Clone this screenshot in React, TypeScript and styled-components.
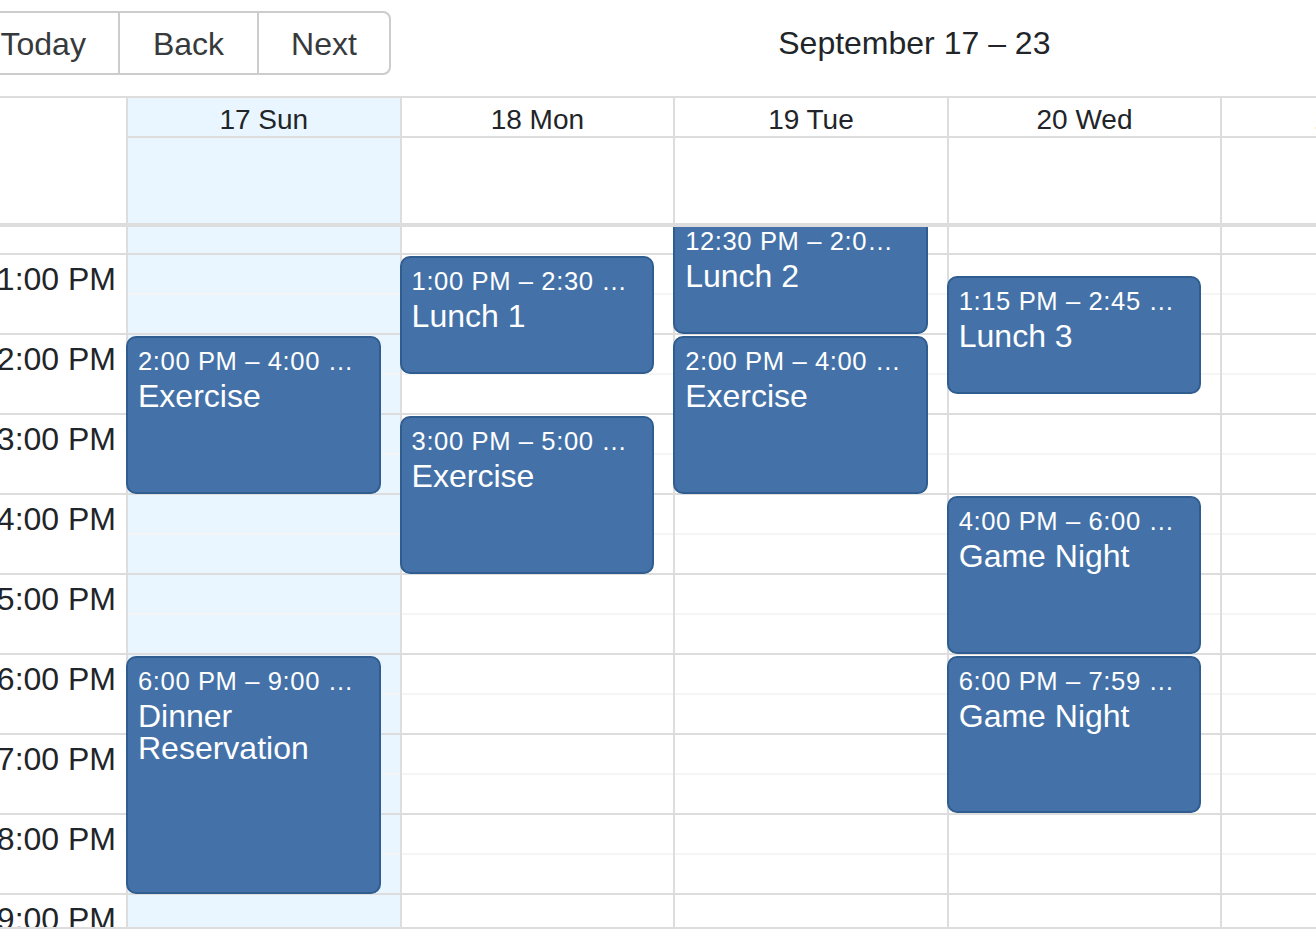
import React, { useLayoutEffect, useRef } from "react";
import styled, { createGlobalStyle } from "styled-components";

const GlobalStyle = createGlobalStyle`
  html, body {
    margin: 0;
    padding: 0;
    overflow: hidden;
    background: #fff;
  }
  body {
    font-family: "Liberation Sans", Arial, sans-serif;
    color: #373a3c;
  }
  * { box-sizing: border-box; }
`;

const HOUR = 80;
const GUTTER = 158;

const Page = styled.div`
  width: 1316px;
  height: 936px;
  overflow: hidden;
  padding-top: 11px;
`;

const Calendar = styled.div`
  width: 2077px;
  margin-left: -34px;
  display: flex;
  flex-direction: column;
`;

const Toolbar = styled.div`
  display: flex;
  align-items: center;
  margin-bottom: 21px;
  font-size: 32px;
`;

const BtnGroup = styled.div`
  display: inline-flex;
  flex: none;
`;

const Button = styled.button<{ $active?: boolean }>`
  font: inherit;
  font-size: 32px;
  color: #373a3c;
  background: ${(p) => (p.$active ? "#e6e6e6" : "#fff")};
  border: 2px solid #ccc;
  margin: 0;
  padding: 13px 32.5px 11px;
  line-height: 36px;
  border-radius: 0;
  white-space: nowrap;
  & + & {
    margin-left: -2px;
  }
  &:first-child {
    border-radius: 8px 0 0 8px;
  }
  &:last-child {
    border-radius: 0 8px 8px 0;
  }
`;

const ToolbarLabel = styled.span`
  flex: 0 0 1046px;
  text-align: center;
  color: #212529;
  line-height: 36px;
`;

const TimeView = styled.div`
  height: 833px;
  border: 2px solid #ddd;
  display: flex;
  flex-direction: column;
`;

const Header = styled.div`
  display: flex;
  flex: none;
  border-bottom: 2px solid #ddd;
`;

const HeaderGutter = styled.div`
  width: ${GUTTER}px;
  flex: none;
`;

const HeaderDay = styled.div<{ $today?: boolean }>`
  flex: 1;
  border-left: 2px solid #ddd;
  background: ${(p) => (p.$today ? "#eaf6ff" : "transparent")};
  display: flex;
  flex-direction: column;
`;

const HeaderCell = styled.div`
  height: 40px;
  border-bottom: 2px solid #ddd;
  text-align: center;
  font-size: 28px;
  line-height: 32px;
  padding-top: 6px;
  color: #212529;
  white-space: nowrap;
`;

const AllDayCell = styled.div`
  height: 85px;
`;

const TimeContent = styled.div`
  flex: 1;
  min-height: 0;
  display: flex;
  align-items: flex-start;
  border-top: 2px solid #ddd;
  overflow: hidden;
`;

const Gutter = styled.div`
  width: ${GUTTER}px;
  flex: none;
`;

const Group = styled.div`
  height: ${HOUR}px;
  border-bottom: 2px solid #ddd;
  display: flex;
  flex-direction: column;
`;

const Slot = styled.div`
  flex: 1;
  & + & {
    border-top: 2px solid #f5f5f5;
  }
`;

const GutterLabel = styled.div`
  flex: 1;
  text-align: right;
  font-size: 32px;
  line-height: 40px;
  padding: 4px 10px 0;
  white-space: nowrap;
  color: #212529;
`;

const DayColumn = styled.div<{ $today?: boolean }>`
  flex: 1;
  position: relative;
  border-left: 2px solid #ddd;
  background: ${(p) => (p.$today ? "#eaf6ff" : "transparent")};
`;

const EventsLayer = styled.div`
  position: absolute;
  top: 0;
  bottom: 0;
  left: -2px;
  right: 19px;
`;

const EventBox = styled.div`
  position: absolute;
  left: 0;
  right: 0;
  background: #4472a8;
  border: 2px solid #2f5d8f;
  border-radius: 10px;
  padding: 4px 10px;
  color: #fff;
  display: flex;
  flex-direction: column;
  overflow: hidden;
`;

const EventLabel = styled.div`
  font-size: 25.6px;
  line-height: 38px;
  letter-spacing: 0.6px;
  white-space: nowrap;
  overflow: hidden;
  text-overflow: ellipsis;
  padding-right: 10px;
  max-width: 100%;
  flex: none;
`;

const EventTitle = styled.div`
  font-size: 32px;
  line-height: 1;
  overflow-wrap: break-word;
`;

type CalEvent = { day: number; start: number; end: number; title: string };

const events: CalEvent[] = [
  { day: 0, start: 14, end: 16, title: "Exercise" },
  { day: 0, start: 18, end: 21, title: "Dinner Reservation" },
  { day: 1, start: 13, end: 14.5, title: "Lunch 1" },
  { day: 1, start: 15, end: 17, title: "Exercise" },
  { day: 2, start: 12.5, end: 14, title: "Lunch 2" },
  { day: 2, start: 14, end: 16, title: "Exercise" },
  { day: 3, start: 13.25, end: 14.75, title: "Lunch 3" },
  { day: 3, start: 16, end: 18, title: "Game Night" },
  { day: 3, start: 18, end: 19 + 59 / 60, title: "Game Night" },
];

const days = ["17 Sun", "18 Mon", "19 Tue", "20 Wed", "21 Thu", "22 Fri", "23 Sat"];

function fmt(h: number): string {
  const totalMin = Math.round(h * 60);
  const hh = Math.floor(totalMin / 60);
  const mm = totalMin % 60;
  const ampm = hh >= 12 ? "PM" : "AM";
  const h12 = hh % 12 === 0 ? 12 : hh % 12;
  return `${h12}:${mm.toString().padStart(2, "0")} ${ampm}`;
}

const hours = Array.from({ length: 24 }, (_, i) => i);

export default function App() {
  const contentRef = useRef<HTMLDivElement>(null);

  useLayoutEffect(() => {
    if (contentRef.current) {
      contentRef.current.scrollTop = 13 * HOUR - 28;
    }
  }, []);

  return (
    <Page>
      <GlobalStyle />
      <Calendar>
        <Toolbar>
          <BtnGroup>
            <Button type="button">Today</Button>
            <Button type="button">Back</Button>
            <Button type="button">Next</Button>
          </BtnGroup>
          <ToolbarLabel>September 17 – 23</ToolbarLabel>
          <BtnGroup>
            <Button type="button">Month</Button>
            <Button type="button" $active>
              Week
            </Button>
            <Button type="button">Day</Button>
            <Button type="button">Agenda</Button>
          </BtnGroup>
        </Toolbar>
        <TimeView>
          <Header>
            <HeaderGutter />
            {days.map((d, i) => (
              <HeaderDay key={d} $today={i === 0}>
                <HeaderCell>{d}</HeaderCell>
                <AllDayCell />
              </HeaderDay>
            ))}
          </Header>
          <TimeContent ref={contentRef}>
            <Gutter>
              {hours.map((h) => (
                <Group key={h}>
                  <GutterLabel>{fmt(h)}</GutterLabel>
                </Group>
              ))}
            </Gutter>
            {days.map((d, i) => (
              <DayColumn key={d} $today={i === 0}>
                {hours.map((h) => (
                  <Group key={h}>
                    <Slot />
                    <Slot />
                  </Group>
                ))}
                <EventsLayer>
                  {events
                    .filter((e) => e.day === i)
                    .map((e, k) => (
                      <EventBox
                        key={k}
                        style={{
                          top: e.start * HOUR + 1,
                          height: (e.end - e.start) * HOUR - 2,
                        }}
                      >
                        <EventLabel>
                          {fmt(e.start)} – {fmt(e.end)}
                        </EventLabel>
                        <EventTitle>{e.title}</EventTitle>
                      </EventBox>
                    ))}
                </EventsLayer>
              </DayColumn>
            ))}
          </TimeContent>
        </TimeView>
      </Calendar>
    </Page>
  );
}
